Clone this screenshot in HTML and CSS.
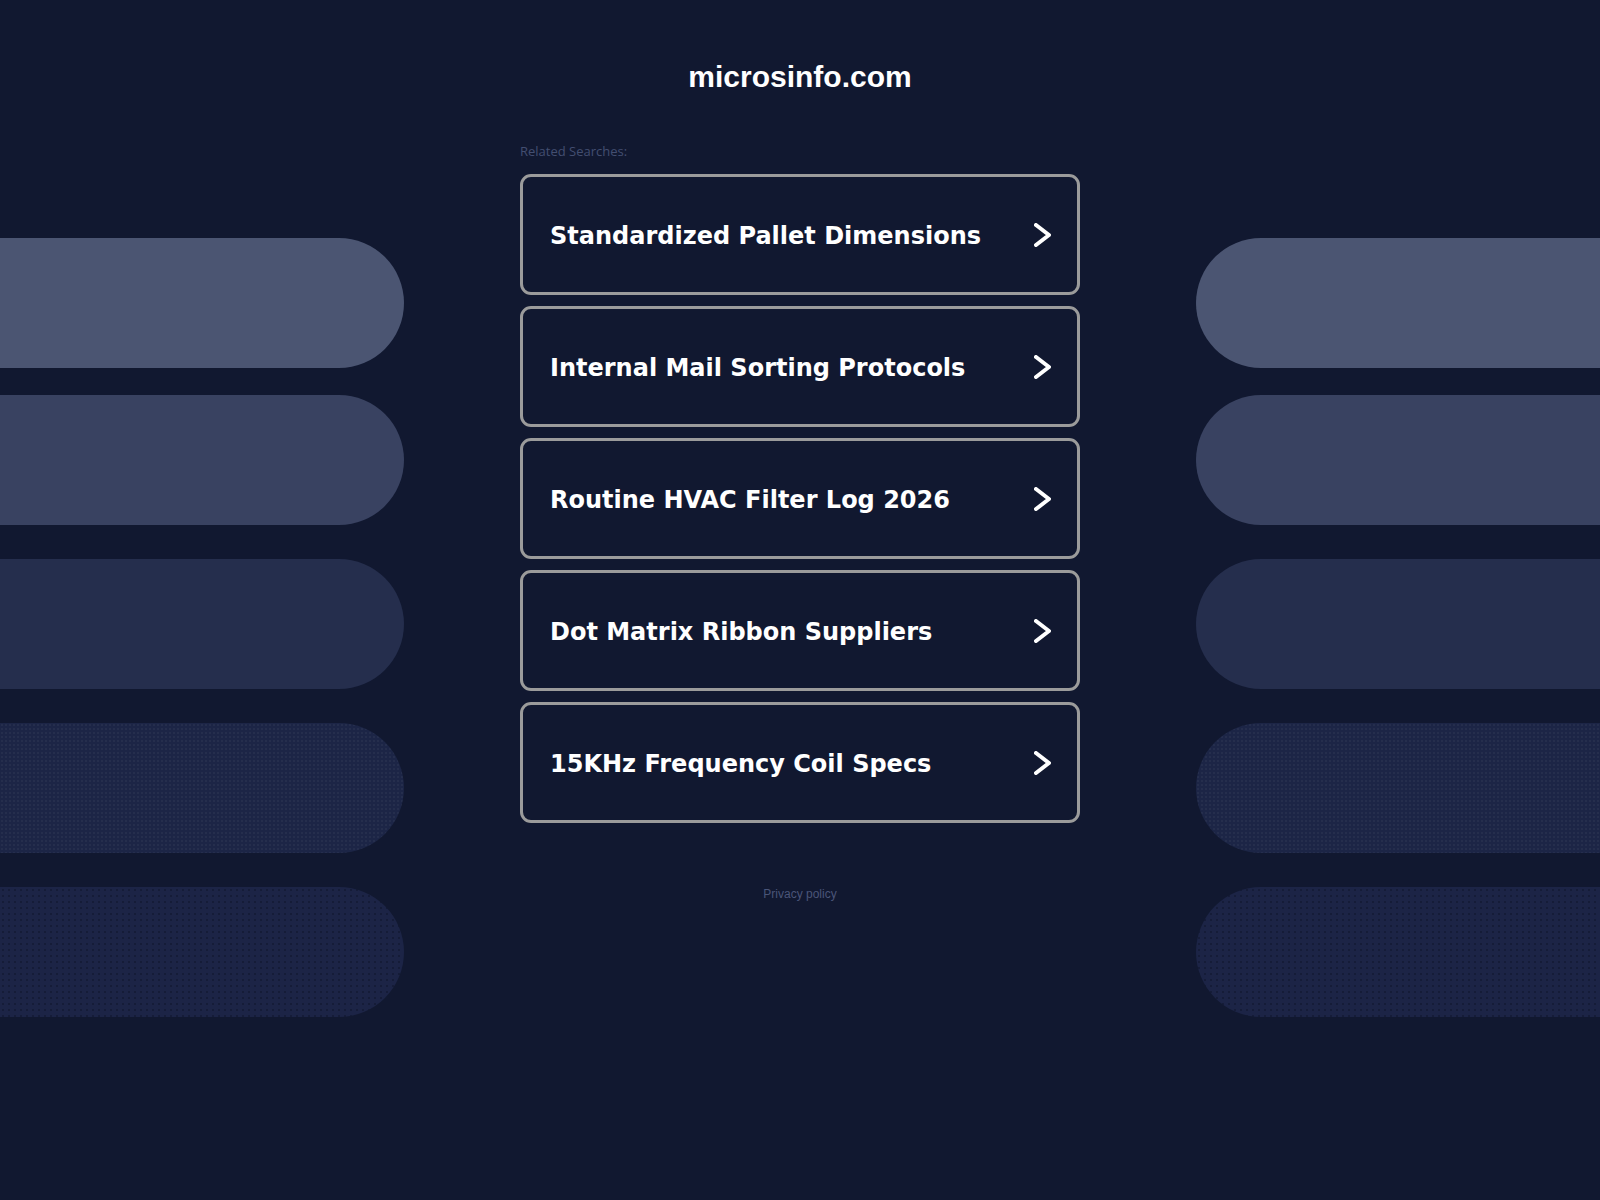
FILE: index.html
```html
<!DOCTYPE html>
<html lang="en">
<head>
  <meta charset="UTF-8">
  <title>microsinfo.com</title>
  <link rel="stylesheet" href="styles.css">
</head>
<body>
  <div class="page">
    <div class="side side-left">
      <div class="pill pill-1"></div>
      <div class="pill pill-2"></div>
      <div class="pill pill-3"></div>
      <div class="pill pill-4"></div>
      <div class="pill pill-5"></div>
    </div>

    <div class="main">
      <h1 class="domain">microsinfo.com</h1>

      <div class="searches">
        <div class="searches-title">Related Searches:</div>

        <a class="search-link" href="#">
          <span>Standardized Pallet Dimensions</span>
          <svg class="chevron" viewBox="0 0 17 24"><polyline points="2,2 15,12 2,22"/></svg>
        </a>
        <a class="search-link" href="#">
          <span>Internal Mail Sorting Protocols</span>
          <svg class="chevron" viewBox="0 0 17 24"><polyline points="2,2 15,12 2,22"/></svg>
        </a>
        <a class="search-link" href="#">
          <span>Routine HVAC Filter Log 2026</span>
          <svg class="chevron" viewBox="0 0 17 24"><polyline points="2,2 15,12 2,22"/></svg>
        </a>
        <a class="search-link" href="#">
          <span>Dot Matrix Ribbon Suppliers</span>
          <svg class="chevron" viewBox="0 0 17 24"><polyline points="2,2 15,12 2,22"/></svg>
        </a>
        <a class="search-link" href="#">
          <span>15KHz Frequency Coil Specs</span>
          <svg class="chevron" viewBox="0 0 17 24"><polyline points="2,2 15,12 2,22"/></svg>
        </a>
      </div>

      <a class="privacy" href="#">Privacy policy</a>
    </div>

    <div class="side side-right">
      <div class="pill pill-1"></div>
      <div class="pill pill-2"></div>
      <div class="pill pill-3"></div>
      <div class="pill pill-4"></div>
      <div class="pill pill-5"></div>
    </div>
  </div>
</body>
</html>
```

FILE: styles.css
```css
html, body {
  margin: 0;
  padding: 0;
}

body {
  background-color: #111830;
  font-family: 'Liberation Sans', Arial, sans-serif;
  min-height: 1200px;
}

.page {
  display: grid;
  grid-template-columns: 404px 1fr 404px;
}

/* decorative pills on both sides */
.side {
  display: flex;
  flex-direction: column;
  padding-top: 238px;
}

.pill {
  height: 130px;
}

.pill + .pill {
  margin-top: 34px;
}

.pill.pill-2 {
  margin-top: 27px;
}

.side-left .pill {
  border-radius: 0 65px 65px 0;
}

.side-right .pill {
  border-radius: 65px 0 0 65px;
}

.pill-1 { background-color: #4b5572; }
.pill-2 { background-color: #394261; }
.pill-3 { background-color: #252e4d; }

.pill-4 {
  background-color: #1c2546;
  background-image: radial-gradient(rgba(255,255,255,0.04) 0.8px, transparent 1px);
  background-size: 4px 4px;
}

.pill-5 {
  background-color: #1c2446;
  background-image: radial-gradient(rgba(10,15,35,0.4) 0.9px, transparent 1.2px);
  background-size: 6px 6px;
}

/* center column */
.main {
  display: flex;
  flex-direction: column;
  align-items: center;
}

.domain {
  margin: 62px 0 0;
  font-size: 30px;
  line-height: 30px;
  font-weight: bold;
  color: #ffffff;
}

.searches {
  width: 560px;
  margin-top: 51px;
}

.searches-title {
  font-family: 'Open Sans', sans-serif;
  font-size: 13px;
  line-height: 16px;
  color: #434e70;
  margin-bottom: 15px;
}

.search-link {
  box-sizing: border-box;
  height: 121px;
  display: flex;
  align-items: center;
  justify-content: space-between;
  padding: 3px 26px 0 27px;
  margin-bottom: 11px;
  border: 3px solid #9b9b9b;
  border-radius: 11px;
  text-decoration: none;
  color: #ffffff;
  font-family: 'DejaVu Sans', Verdana, sans-serif;
  font-weight: bold;
  font-size: 24px;
}

.search-link:last-child {
  margin-bottom: 0;
}

.chevron {
  width: 17px;
  height: 24px;
  margin-top: -3px;
  fill: none;
  stroke: #ffffff;
  stroke-width: 4;
  stroke-linecap: round;
  stroke-linejoin: round;
}

.privacy {
  margin-top: 64px;
  font-size: 12px;
  line-height: 14px;
  color: #4a5578;
  text-decoration: none;
}
```
